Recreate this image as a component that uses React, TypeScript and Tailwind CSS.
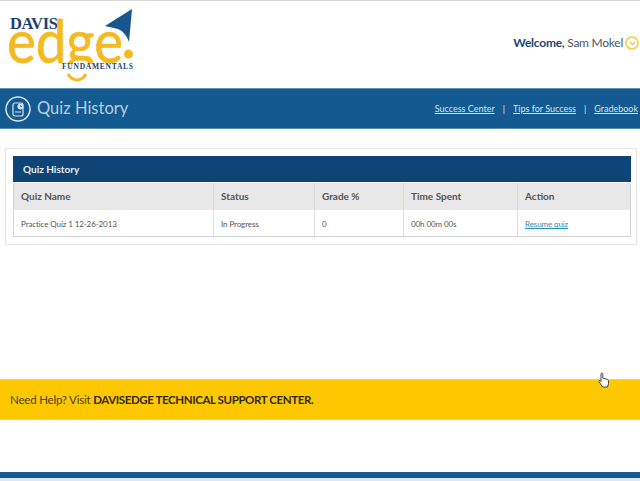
import { ChevronDown } from "lucide-react";

const font = { fontFamily: 'Lato, sans-serif' };

const columns = [
  { name: "Quiz Name", value: "Practice Quiz 1 12-26-2013", width: "w-[200px]" },
  { name: "Status", value: "In Progress", width: "w-[101px]" },
  { name: "Grade %", value: "0", width: "w-[89px]" },
  { name: "Time Spent", value: "00h 00m 00s", width: "w-[114px]" },
  { name: "Action", value: "Resume quiz", width: "flex-1" },
];

function Logo() {
  return (
    <svg width="136" height="84" viewBox="0 0 136 84" className="block">
      <defs>
        <clipPath id="edge-clip">
          <rect x="0" y="0" width="136" height="61" />
        </clipPath>
      </defs>
      <path d="M104 23 L131 6 L128 39 C126 33 122 28 117 26 Z" fill="#17558c" />
      <text x="9" y="26" fontFamily="Liberation Serif, serif" fontWeight="700" fontSize="16.5" fill="#1c3f73" textLength="48">
        DAVIS
      </text>
      <g clipPath="url(#edge-clip)">
        <text
          x="6"
          y="60"
          fontFamily="Lato, sans-serif"
          fontSize="60"
          fill="#f5b921"
          stroke="#f5b921"
          strokeWidth="0.6"
          textLength="116"
          lengthAdjust="spacingAndGlyphs"
        >
          edge
        </text>
      </g>
      <path d="M67 71 C72 79 80 79 85 71" fill="none" stroke="#f5b921" strokeWidth="3" />
      <circle cx="127.5" cy="51" r="4.5" fill="#f5b921" />
      <text x="61" y="66" fontFamily="Liberation Serif, serif" fontWeight="700" fontSize="7.5" fill="#1c3f73" textLength="71">
        FUNDAMENTALS
      </text>
    </svg>
  );
}

function QuizIcon() {
  return (
    <svg width="26" height="26" viewBox="0 0 26 26" fill="none" stroke="#d8e6f0" className="block">
      <circle cx="13" cy="13" r="12" strokeWidth="1.5" />
      <rect x="8" y="7" width="10" height="13" rx="2" strokeWidth="1.2" />
      <circle cx="15.5" cy="10.5" r="3" fill="#d8e6f0" stroke="none" />
      <path d="M15.5 9v1.5h1.5" stroke="#14598f" strokeWidth="0.8" />
      <path d="M10 16h6" strokeWidth="1" />
    </svg>
  );
}

function Pointer() {
  return (
    <svg width="12" height="16" viewBox="0 0 12 16" className="absolute right-[30px] top-[-8px]">
      <path
        d="M3 1.5c.8-.8 1.8-.3 1.8.7v4l4 1c1 .3 1.7 1 1.7 2v2.5L9.5 15H4.5L1 9.5c-.4-.8.5-1.5 1.2-.9L3 9.5Z"
        fill="#fff"
        stroke="#333"
        strokeWidth="0.9"
      />
    </svg>
  );
}

export default function App() {
  return (
    <div className="w-[640px] h-[481px] bg-white overflow-hidden flex flex-col" style={font}>
      <div className="h-px bg-[#d9d9d9]" />
      <header className="h-[87px] flex items-center justify-between px-[1px]">
        <Logo />
        <div className="flex items-center gap-[2px] text-[12px] tracking-[-0.25px] text-[#4a5866] mt-[-3px]">
          <span>
            <span className="font-bold text-[#1d4770]">Welcome,</span> Sam Mokel
          </span>
          <span className="w-[14px] h-[14px] rounded-full border-2 border-[#f3d466] flex items-center justify-center">
            <ChevronDown size={9} strokeWidth={3} className="text-[#e5b93a]" />
          </span>
        </div>
      </header>

      <nav className="h-[41px] bg-[#14598f] flex items-center justify-between pl-[5px] pr-[2px] border-y border-[#5e90b5]">
        <div className="flex items-center gap-[6px]">
          <QuizIcon />
          <h1 className="text-[16.5px] text-[#b5cfe2]">Quiz History</h1>
        </div>
        <div className="flex items-center gap-[8px] text-[9px] text-[#d6e3ee]">
          <a className="underline">Success Center</a>
          <span>|</span>
          <a className="underline">Tips for Success</a>
          <span>|</span>
          <a className="underline">Gradebook</a>
        </div>
      </nav>

      <main className="pt-[19px] pl-[5px] pr-[3px]">
        <section className="border border-[#e6e6e6] pl-[7px] pr-[5px] py-[7px] h-[97px]">
          <div className="h-[26px] bg-[#0f4476] flex items-center pl-[10px] text-[10px] font-bold text-[#e6edf3]">
            Quiz History
          </div>
          <div className="border-x border-b border-[#d2d2d2]">
            <div className="flex h-[27px] bg-[#e8e8e8] mt-px">
              {columns.map((c) => (
                <div
                  key={c.name}
                  className={`${c.width} flex items-center pl-[7px] text-[10px] font-bold text-[#555] border-r border-[#d8d8d8] last:border-r-0`}
                >
                  {c.name}
                </div>
              ))}
            </div>
            <div className="flex h-[26px] bg-white">
              {columns.map((c) => (
                <div
                  key={c.name}
                  className={`${c.width} flex items-center pl-[7px] pt-[2px] text-[8px] tracking-[-0.1px] border-r border-[#dedede] last:border-r-0 ${
                    c.name === "Action" ? "text-[#2b8fb8] underline" : "text-[#555]"
                  }`}
                >
                  {c.value}
                </div>
              ))}
            </div>
          </div>
        </section>
      </main>

      <div className="relative mt-[134px] h-[41px] bg-[#fdc800] border-y border-[#f5d558] flex items-center pl-[10px] text-[11.5px] tracking-[-0.2px] text-[#4a4020]">
        <span>
          Need Help? Visit <span className="font-bold tracking-[-0.4px] text-[#33290c]">DAVISEDGE TECHNICAL SUPPORT CENTER.</span>
        </span>
        <Pointer />
      </div>

      <div className="mt-[52px] h-[6px] bg-[#14598f]" />
      <div className="flex-1 bg-[#dbe8f3]" />
    </div>
  );
}
